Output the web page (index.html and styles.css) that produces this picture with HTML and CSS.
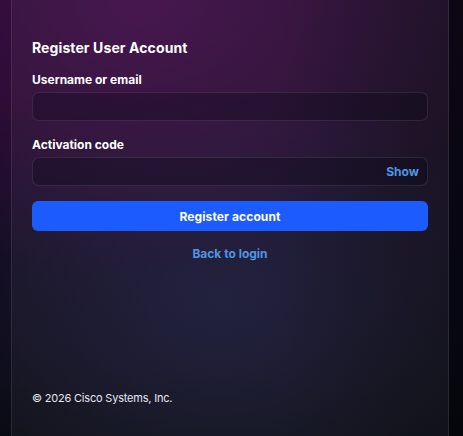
FILE: index.html
```html
<!DOCTYPE html>
<html lang="en">
<head>
<meta charset="utf-8">
<title>Register User Account</title>
<link rel="stylesheet" href="styles.css">
</head>
<body>
<main class="panel">
  <form class="form">
    <h1 class="title">Register User Account</h1>
    <label class="label" for="user">Username or email</label>
    <div class="field"><input class="input" id="user" type="text"></div>
    <label class="label label-gap" for="code">Activation code</label>
    <div class="field"><input class="input" id="code" type="password"><span class="show">Show</span></div>
    <button class="btn" type="button">Register account</button>
    <a class="back" href="#">Back to login</a>
  </form>
  <footer class="footer">© 2026 Cisco Systems, Inc.</footer>
</main>
</body>
</html>
```
FILE: styles.css
```css
* { box-sizing: border-box; }
html, body { height: 100%; }
body {
  margin: 0;
  font-family: Inter, "Noto Sans", sans-serif;
  color: #fff;
  background:
    linear-gradient(90deg, rgba(0, 0, 0, 0) 449px, rgba(2, 4, 8, 0.55) 449px),
    linear-gradient(90deg, rgba(4, 6, 10, 0) 60%, rgba(4, 6, 10, 0.35) 100%),
    radial-gradient(ellipse 340px 280px at 140px 0px, rgba(64, 14, 72, 1) 0%, rgba(64, 14, 72, 0) 100%),
    radial-gradient(ellipse 300px 240px at 220px 300px, rgba(28, 28, 62, 0.8) 0%, rgba(28, 28, 62, 0) 100%),
    linear-gradient(180deg, #210b2b 0%, #150c22 50%, #080a10 100%);
  display: flex;
  padding: 0 14px 0 11px;
}
.panel {
  width: 438px;
  height: 436px;
  border-left: 1px solid rgba(255, 255, 255, 0.09);
  border-right: 1px solid rgba(255, 255, 255, 0.09);
  background: rgba(255, 255, 255, 0.04);
  padding: 39px 20px 31px;
  display: flex;
  flex-direction: column;
}
.form { display: flex; flex-direction: column; }
.title {
  margin: 0 0 16px;
  font-size: 14px;
  line-height: 17px;
  font-weight: 700;
  letter-spacing: 0.1px;
}
.label {
  font-size: 12px;
  line-height: 15px;
  font-weight: 700;
  margin-bottom: 5px;
}
.label-gap { margin-top: 16px; }
.field {
  position: relative;
  height: 29px;
  border: 1px solid rgba(255, 255, 255, 0.1);
  border-radius: 7px;
  background: rgba(8, 6, 20, 0.3);
}
.input {
  width: 100%;
  height: 100%;
  border: 0;
  background: transparent;
  outline: none;
  color: #fff;
  padding: 0 10px;
  font: inherit;
}
.show {
  position: absolute;
  right: 8px;
  top: 0;
  line-height: 27px;
  font-size: 12px;
  font-weight: 700;
  color: #4f95e6;
}
.btn {
  margin-top: 15px;
  height: 30px;
  border: 0;
  border-radius: 6px;
  background: #1c5cff;
  color: #fff;
  font: 700 12px/30px Inter, "Noto Sans", sans-serif;
  letter-spacing: 0.1px;
}
.back {
  margin-top: 15px;
  align-self: center;
  font-size: 12px;
  line-height: 15px;
  font-weight: 700;
  color: #4f95e6;
  text-decoration: none;
}
.footer {
  margin-top: auto;
  font-size: 11px;
  line-height: 14px;
  color: #e6e6ee;
  letter-spacing: -0.2px;
}
```
